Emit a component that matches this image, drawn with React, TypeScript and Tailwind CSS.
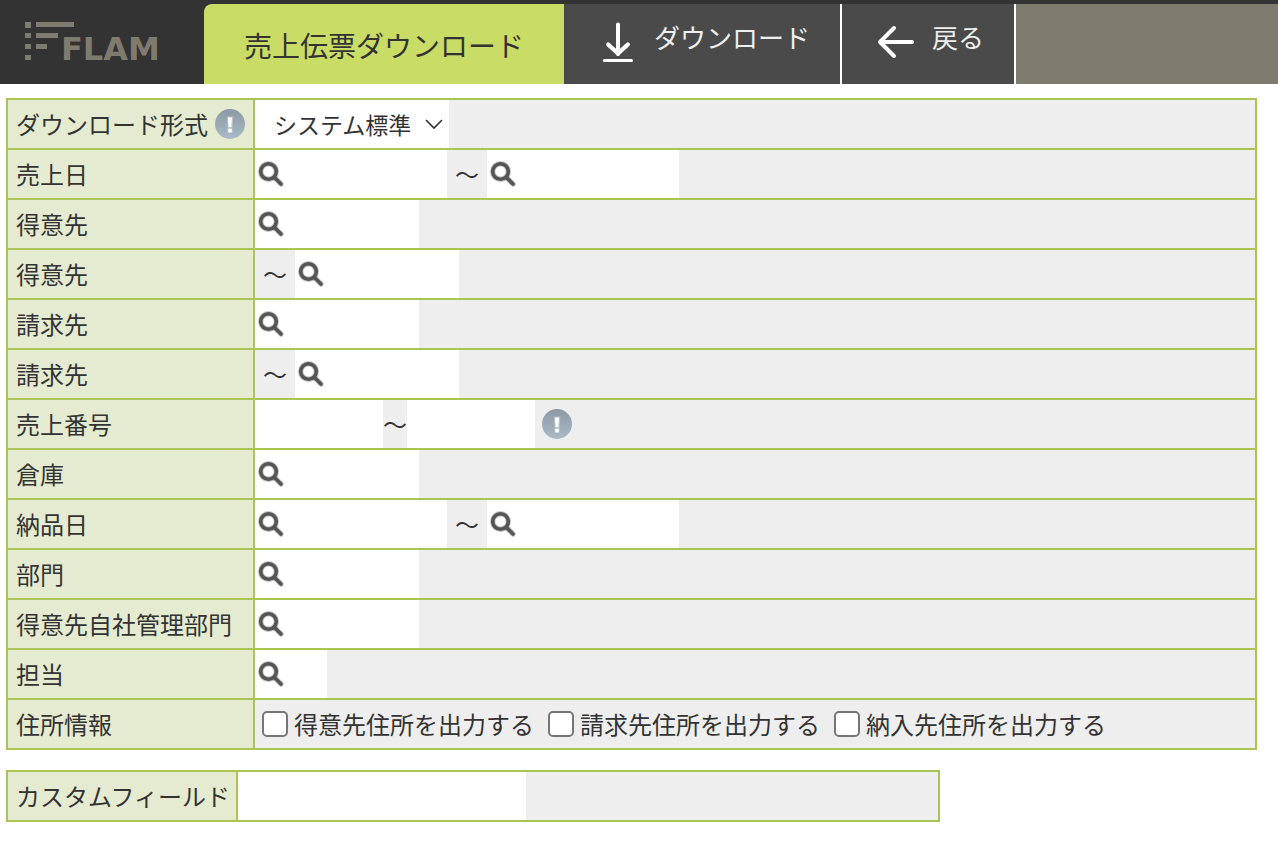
import { useState, type ReactNode } from 'react';
import { clsx } from 'clsx';

function Logo() {
  return (
    <svg viewBox="0 0 204 84" className="w-[204px] h-[84px] shrink-0" role="img" aria-label="FLAM">
      <g fill="#807b6f">
        <rect x="25" y="22" width="6" height="6" />
        <rect x="25" y="33" width="6" height="5" />
        <rect x="25" y="44" width="6" height="5" />
        <rect x="25" y="55" width="6" height="5" />
        <rect x="36" y="22" width="38" height="5" />
        <rect x="36" y="33" width="22" height="5" />
        <rect x="36" y="44" width="11" height="5" />
        <text x="61" y="60" fontFamily="DejaVu Sans, sans-serif" fontWeight="700" fontSize="32">
          FLAM
        </text>
      </g>
    </svg>
  );
}

function DownloadIcon() {
  return (
    <svg viewBox="0 0 32 42" className="w-8 h-[42px] shrink-0" fill="none" stroke="#fff" strokeLinecap="round" strokeLinejoin="round" aria-hidden="true">
      <path d="M16 3.5V33" strokeWidth="4" />
      <path d="M6.2 23.5 16 32.5l9.8-9" strokeWidth="4.4" />
      <path d="M2.4 39.5h27.2" strokeWidth="3" />
    </svg>
  );
}

function BackIcon() {
  return (
    <svg viewBox="0 0 40 42" className="w-10 h-[42px] shrink-0" fill="none" stroke="#fff" strokeWidth="4" strokeLinecap="round" strokeLinejoin="round" aria-hidden="true">
      <path d="M4.5 21H36" />
      <path d="M18 7 4 21l14 14" />
    </svg>
  );
}

function InfoButton({ label }: { label: string }) {
  return (
    <button type="button" className="w-[30px] h-[30px] shrink-0" aria-label={label}>
      <svg viewBox="0 0 30 30" className="w-[30px] h-[30px]" aria-hidden="true">
        <defs>
          <linearGradient id="info" x1="0" y1="0" x2="0" y2="1">
            <stop offset="0" stopColor="#8b99a4" />
            <stop offset="1" stopColor="#a9bac6" />
          </linearGradient>
        </defs>
        <circle cx="15" cy="15" r="15" fill="url(#info)" />
        <g fill="#fff">
          <path d="M11.5 7.5h7l-1 10v6.500h-5v-6.500z" opacity=".3" />
          <path d="M13 8.500h4l-.6 9.500h-2.800z" />
          <circle cx="15" cy="21.500" r="2" />
        </g>
      </svg>
    </button>
  );
}

function SearchIcon() {
  return (
    <svg viewBox="0 0 26 26" className="w-[26px] h-[26px]" fill="none" stroke="#555" strokeLinecap="round" aria-hidden="true">
      <g strokeWidth="5.4" strokeOpacity=".35">
        <circle cx="10.5" cy="10.5" r="7.8" />
        <path d="m17 17 6 6" />
      </g>
      <g strokeWidth="3.6">
        <circle cx="10.5" cy="10.5" r="7.8" />
        <path d="m17 17 6 6" />
      </g>
    </svg>
  );
}

function Row({ label, info, children }: { label: string; info?: boolean; children: ReactNode }) {
  return (
    <div className="flex">
      <div className="w-[247px] min-h-12 shrink-0 flex items-center gap-[7px] pl-2 bg-[#e5ebd1] border-r-2 border-[#abc554] whitespace-nowrap">
        <span>{label}</span>
        {info && <InfoButton label={`${label}の説明`} />}
      </div>
      <div className="flex-1 flex bg-[#eee]">{children}</div>
    </div>
  );
}

function SearchField({ label, size = 'code' }: { label: string; size?: 'date' | 'code' | 'short' }) {
  return (
    <div
      className={clsx(
        'flex bg-white',
        size === 'date' && 'w-48',
        size === 'code' && 'w-[164px]',
        size === 'short' && 'w-[72px]',
      )}
    >
      <button type="button" className="w-8 shrink-0 flex items-center pl-[3px]" aria-label={`${label}を検索`}>
        <SearchIcon />
      </button>
      <input type="text" aria-label={label} className="min-w-0 flex-1 outline-none" />
    </div>
  );
}

function Tilde({ narrow }: { narrow?: boolean }) {
  return (
    <span className={clsx('flex items-center justify-center', narrow ? 'w-6' : 'w-10')}>～</span>
  );
}

const addressOptions = ['得意先住所を出力する', '請求先住所を出力する', '納入先住所を出力する'];

export default function App() {
  const [checked, setChecked] = useState<string[]>([]);

  const toggle = (option: string) => {
    setChecked((prev) => (prev.includes(option) ? prev.filter((o) => o !== option) : [...prev, option]));
  };

  return (
    <div className="min-h-screen bg-white text-[#333] text-2xl font-['Noto_Sans_CJK_JP',sans-serif]">
      <header className="flex bg-[#333]">
        <Logo />
        <div className="flex flex-1 mt-1 h-20 whitespace-nowrap">
          <h1 className="w-[360px] shrink-0 flex items-center pl-10 pt-1 bg-[#c9dc65] rounded-tl-lg text-[28px]">
            売上伝票ダウンロード
          </h1>
          <nav className="flex flex-1 bg-[#807b6f] text-[26px] leading-8 text-[#eee]">
            <button type="button" className="flex items-start gap-5 pt-[17px] pl-[38px] pr-[30px] bg-[#4a4a4a] border-r-2 border-white">
              <DownloadIcon />
              ダウンロード
            </button>
            <button type="button" className="flex items-start gap-4 pt-[17px] pl-[34px] pr-[30px] bg-[#4a4a4a] border-r-2 border-white">
              <BackIcon />
              戻る
            </button>
          </nav>
        </div>
      </header>

      <form className="pt-[14px] pl-[6px] pr-[21px]" onSubmit={(e) => e.preventDefault()}>
        <div className="border-2 divide-y-2 border-[#abc554] divide-[#abc554]">
          <Row label="ダウンロード形式" info>
            <div className="grid w-[194px] bg-white">
              <select
                aria-label="ダウンロード形式"
                className="col-start-1 row-start-1 appearance-none pl-[19px] text-[23px] outline-none"
              >
                <option>システム標準</option>
              </select>
              <svg
                viewBox="0 0 18 12"
                className="col-start-1 row-start-1 w-[18px] h-3 mr-[6px] self-center justify-self-end pointer-events-none"
                fill="none"
                stroke="#333"
                strokeWidth="1.6"
                aria-hidden="true"
              >
                <path d="m1 2 8 8 8-8" />
              </svg>
            </div>
          </Row>
          <Row label="売上日">
            <SearchField label="売上日（開始）" size="date" />
            <Tilde />
            <SearchField label="売上日（終了）" size="date" />
          </Row>
          <Row label="得意先">
            <SearchField label="得意先（開始）" />
          </Row>
          <Row label="得意先">
            <Tilde />
            <SearchField label="得意先（終了）" />
          </Row>
          <Row label="請求先">
            <SearchField label="請求先（開始）" />
          </Row>
          <Row label="請求先">
            <Tilde />
            <SearchField label="請求先（終了）" />
          </Row>
          <Row label="売上番号">
            <input type="text" aria-label="売上番号（開始）" className="w-32 bg-white outline-none" />
            <Tilde narrow />
            <input type="text" aria-label="売上番号（終了）" className="w-32 bg-white outline-none" />
            <div className="flex items-center pl-[7px]">
              <InfoButton label="売上番号の説明" />
            </div>
          </Row>
          <Row label="倉庫">
            <SearchField label="倉庫" />
          </Row>
          <Row label="納品日">
            <SearchField label="納品日（開始）" size="date" />
            <Tilde />
            <SearchField label="納品日（終了）" size="date" />
          </Row>
          <Row label="部門">
            <SearchField label="部門" />
          </Row>
          <Row label="得意先自社管理部門">
            <SearchField label="得意先自社管理部門" />
          </Row>
          <Row label="担当">
            <SearchField label="担当" size="short" />
          </Row>
          <Row label="住所情報">
            <div className="flex flex-wrap items-center gap-x-[14px] pl-[7px]">
              {addressOptions.map((option) => (
                <label key={option} className="flex items-center gap-[6px]">
                  <input
                    type="checkbox"
                    checked={checked.includes(option)}
                    onChange={() => toggle(option)}
                    className="appearance-none w-[26px] h-[26px] rounded-[5px] border-2 border-[#767676] bg-white checked:bg-[#767676]"
                  />
                  {option}
                </label>
              ))}
            </div>
          </Row>
        </div>

        <div className="mt-5 w-[934px] max-w-full min-h-[52px] flex border-2 border-[#abc554] bg-[#eee]">
          <label htmlFor="custom" className="w-[230px] shrink-0 flex items-center pl-2 bg-[#e5ebd1] border-r-2 border-[#abc554] whitespace-nowrap">
            カスタムフィールド
          </label>
          <input id="custom" type="text" className="w-72 bg-white outline-none" />
        </div>
      </form>
    </div>
  );
}
